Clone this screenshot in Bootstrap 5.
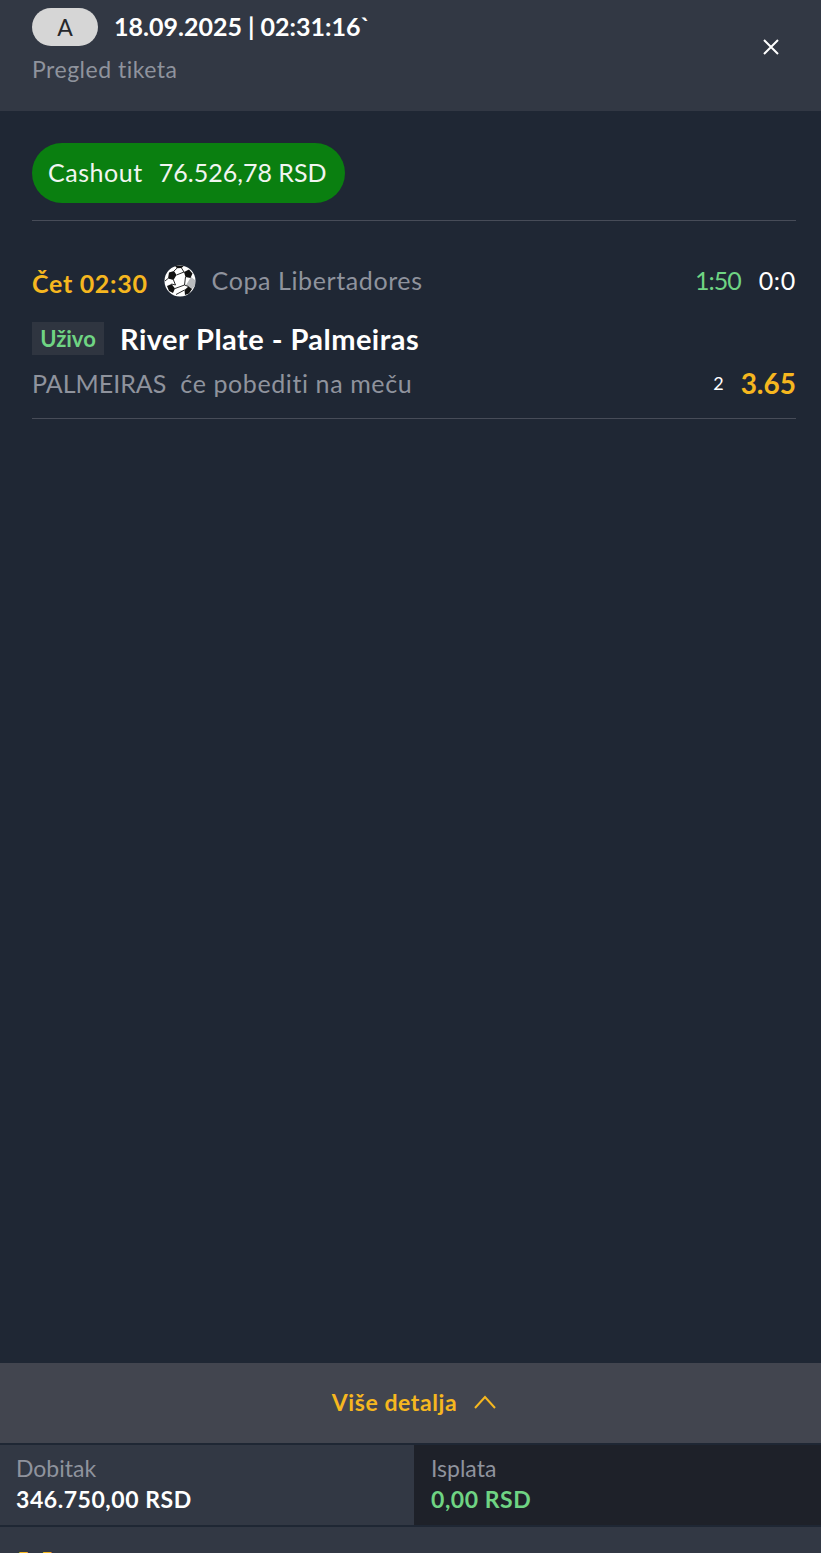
<!DOCTYPE html>
<html lang="en">

<head>
	<meta charset="UTF-8">
	<title>Pregled tiketa</title>
	<link href="https://cdn.jsdelivr.net/npm/bootstrap@5.3.3/dist/css/bootstrap.min.css" rel="stylesheet">
	<style>
		html, body {
			height: 1553px;
			overflow: hidden;
		}

		body {
			background-color: #1f2734;
			font-family: "Lato", "Liberation Sans", sans-serif;
			color: #fff;
		}

		.ticket-top {
			height: 111px;
			background-color: #323844;
			padding: 8px 32px 0;
		}

		.type-pill {
			width: 66px;
			height: 38px;
			border-radius: 19px;
			background-color: #d6d6d6;
			color: #26282c;
			font-size: 23px;
		}

		.ticket-date {
			font-size: 25px;
			font-weight: 700;
			margin-left: 16px;
		}

		.ticket-sub {
			font-size: 23px;
			color: #8f939d;
			line-height: 28px;
			margin-top: 9px;
			letter-spacing: .5px;
		}

		.close-x {
			margin: 31px 10px 0 0;
		}

		.ticket-main {
			padding: 32px 25px 0 32px;
		}

		.cashout-pill {
			height: 60px;
			width: 313px;
			border-radius: 30px;
			background-color: #0a7f10;
			color: #f1f5f1;
			font-size: 25px;
			padding: 0 16px;
			gap: 16px;
			margin-bottom: 17px;
		}

		.cashout-label {
			letter-spacing: .55px;
		}

		.thin-line {
			height: 1px;
			background-color: #474c58;
		}

		.event-row {
			height: 36px;
			margin-top: 42px;
		}

		.event-time {
			font-size: 25px;
			font-weight: 700;
			color: #f6b71f;
			margin-top: 6px;
			letter-spacing: .7px;
		}

		.event-league {
			font-size: 25px;
			color: #8f939d;
			letter-spacing: .6px;
		}

		.clock-green {
			font-size: 25px;
			color: #6fd483;
			letter-spacing: -1px;
		}

		.score-white {
			font-size: 25px;
			margin-left: 18px;
			letter-spacing: .7px;
		}

		.live-tag {
			width: 72px;
			height: 33px;
			background-color: #2f3540;
			color: #6fd483;
			font-size: 22px;
			font-weight: 700;
		}

		.match-row {
			margin-top: 18px;
		}

		.match-name {
			font-size: 29px;
			font-weight: 700;
			margin-left: 16px;
			letter-spacing: .45px;
		}

		.pick-row {
			height: 40px;
			margin-top: 3px;
			margin-bottom: 14px;
		}

		.pick-team {
			font-size: 25px;
			color: #8f939d;
			margin-right: 14px;
		}

		.pick-text {
			font-size: 25px;
			color: #8f939d;
			letter-spacing: .6px;
		}

		.pick-code {
			font-size: 18px;
			margin-right: 17px;
		}

		.pick-odd {
			font-size: 28px;
			font-weight: 700;
			color: #f6b71f;
			margin-bottom: 2px;
		}

		.more-bar {
			height: 80px;
			background-color: #42454f;
			color: #f6b71f;
			font-size: 23px;
			font-weight: 700;
			gap: 16px;
			margin-bottom: 2px;
			letter-spacing: .6px;
			padding: 0 0 2px 8px;
		}

		.sum-cell {
			height: 80px;
			padding: 8px 16px 0;
			line-height: 30px;
		}

		.sum-win {
			width: 414px;
			background-color: #323844;
		}

		.sum-pay {
			background-color: #1e2129;
			padding-left: 17px;
		}

		.sum-label {
			font-size: 23px;
			color: #8f939d;
			margin-bottom: 1px;
		}

		.sum-value {
			font-size: 23px;
			font-weight: 700;
			letter-spacing: .55px;
		}

		.sum-green {
			color: #6fd483;
		}

		.bottom-strip {
			margin-top: 2px;
			height: 26px;
			background-color: #323844;
			padding: 19px 0 0 16px;
			overflow: hidden;
			color: #f6b71f;
			font-size: 23px;
			font-weight: 700;
			line-height: 28px;
			letter-spacing: 2.5px;
		}
	</style>
</head>

<body>
	<div class="d-flex flex-column vh-100">
		<div class="ticket-top d-flex justify-content-between flex-shrink-0">
			<div>
				<div class="d-flex align-items-center">
					<div class="type-pill d-flex align-items-center justify-content-center">A</div>
					<div class="ticket-date">18.09.2025 | 02:31:16`</div>
				</div>
				<div class="ticket-sub">Pregled tiketa</div>
			</div>
			<div class="close-x">
				<svg class="d-block" width="16" height="16" viewBox="0 0 16 16" fill="none" stroke="#fff" stroke-width="2">
					<path d="M1 1 15 15M15 1 1 15" />
				</svg>
			</div>
		</div>

		<div class="ticket-main flex-grow-1">
			<div class="cashout-pill d-flex align-items-center">
				<span class="cashout-label">Cashout</span>
				<span>76.526,78 RSD</span>
			</div>
			<div class="thin-line"></div>

			<div class="event-row d-flex align-items-center">
				<span class="event-time">Čet 02:30</span>
				<svg class="mx-3" width="32" height="32" viewBox="0 0 32 32">
					<circle cx="16" cy="16" r="15.5" fill="#fff" />
					<path d="M27 12 31 15 31 21 27 25 22 20Z" fill="#b9bbbd" />
					<path d="M5 7.5 10 6 12.5 10 9.5 15 4 13.5ZM20 7 25 4.5 28.5 8.5 26.5 13 21.5 12ZM3 21 7.5 19 11 23.5 9 28 5 26ZM20.5 25 24.5 21.5 28 24 25 28.5 21 30ZM11 .8H20L17.5 3 13 3.2Z" fill="#111" />
					<path d="M12.5 10 20 7M9.5 15 11.5 20 7.5 19M21.5 12 20.5 20 11 23.5M20.5 20 24.5 21.5M12 29.5 20.5 25M10 6 13 3.2M20 7 17.5 3M4 13.5 1 16" fill="none" stroke="#111" stroke-width=".9" />
				</svg>
				<span class="event-league">Copa Libertadores</span>
				<span class="clock-green ms-auto">1:50</span>
				<span class="score-white">0:0</span>
			</div>

			<div class="match-row d-flex align-items-center">
				<div class="live-tag d-flex align-items-center justify-content-center">Uživo</div>
				<div class="match-name">River Plate - Palmeiras</div>
			</div>

			<div class="pick-row d-flex align-items-center">
				<span class="pick-team">PALMEIRAS</span>
				<span class="pick-text">će pobediti na meču</span>
				<span class="pick-code ms-auto">2</span>
				<span class="pick-odd">3.65</span>
			</div>
			<div class="thin-line"></div>
		</div>

		<div class="flex-shrink-0">
			<div class="more-bar d-flex align-items-center justify-content-center">
				<span>Više detalja</span>
				<svg width="24" height="14" viewBox="0 0 24 14" fill="none" stroke="#f6b71f" stroke-width="2">
					<path d="M2 13 12 2 22 13" />
				</svg>
			</div>
			<div class="d-flex">
				<div class="sum-cell sum-win">
					<div class="sum-label">Dobitak</div>
					<div class="sum-value">346.750,00 RSD</div>
				</div>
				<div class="sum-cell sum-pay flex-grow-1">
					<div class="sum-label">Isplata</div>
					<div class="sum-value sum-green">0,00 RSD</div>
				</div>
			</div>
			<div class="bottom-strip">5.5</div>
		</div>
	</div>

	<script src="https://cdn.jsdelivr.net/npm/bootstrap@5.3.3/dist/js/bootstrap.bundle.min.js"></script>
</body>

</html>
